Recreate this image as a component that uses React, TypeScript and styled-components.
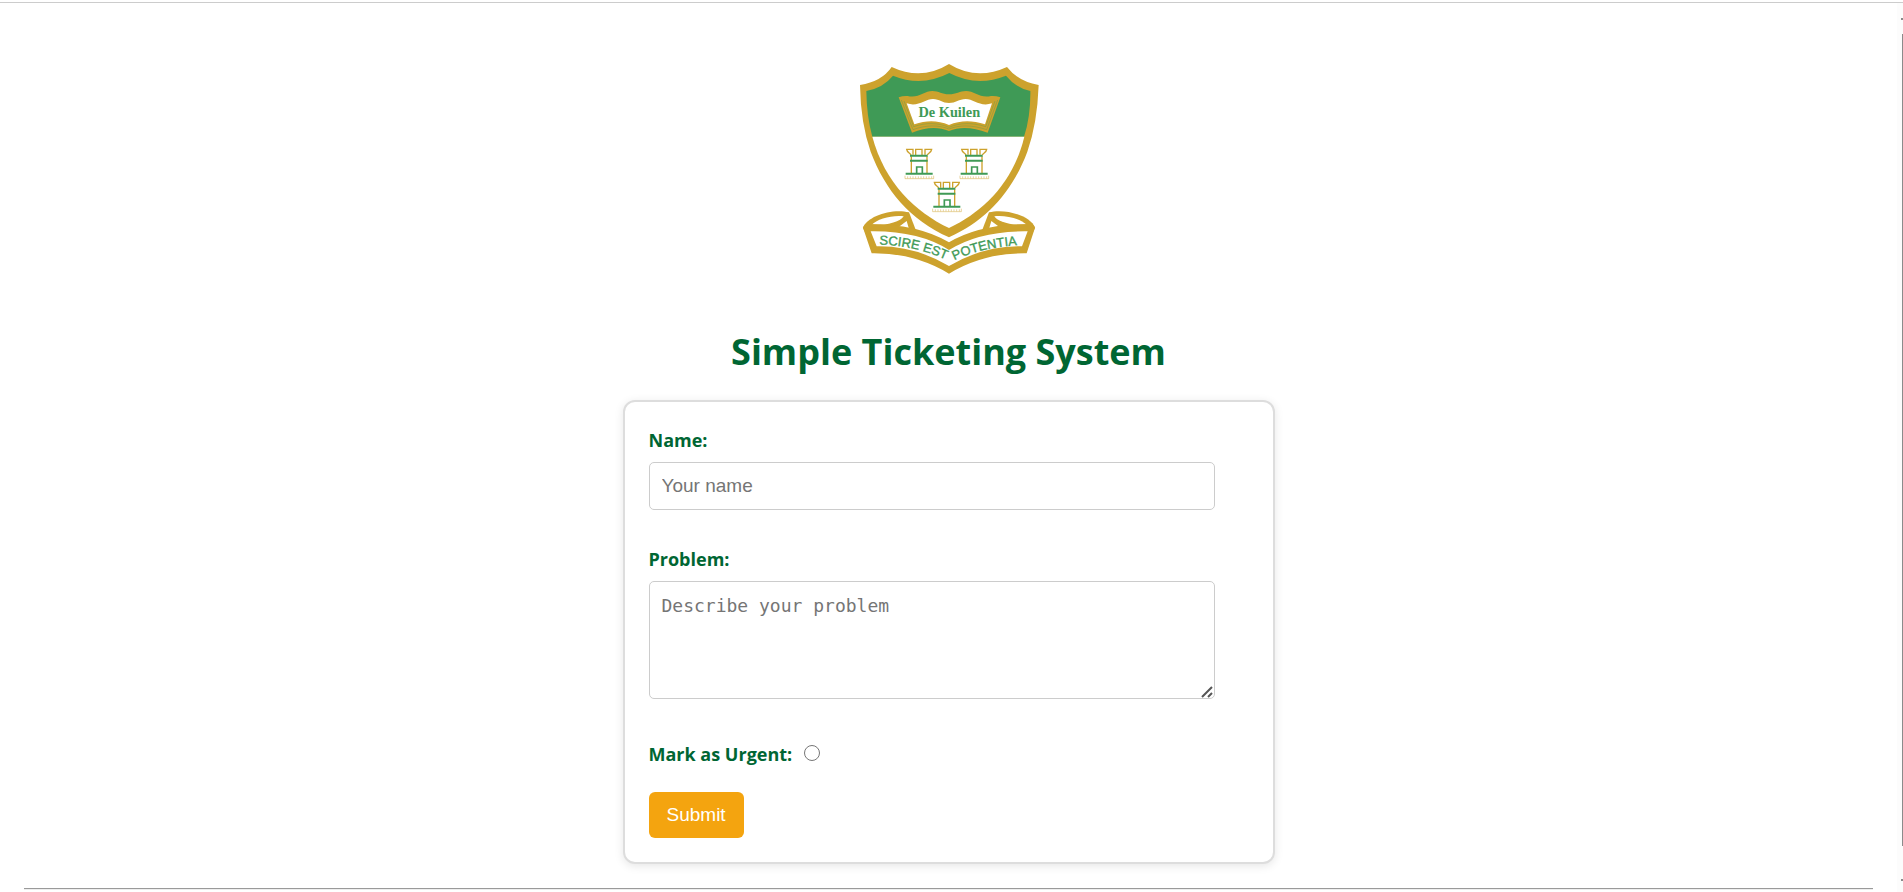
import React from "react";
import styled, { createGlobalStyle } from "styled-components";

const GOLD = "#cda22d";
const GREEN = "#3f9a56";

const GlobalStyle = createGlobalStyle`
  *, *::before, *::after { box-sizing: border-box; }
  html, body { margin: 0; background: #fff; }
  body { overflow: hidden; font-family: "Open Sans", "Noto Sans", sans-serif; }
`;

const Shell = styled.div`
  display: flex;
  height: 100vh;
  overflow: hidden;
  border-top: 1px solid #ccc;
  margin-top: 2px;
`;

const Page = styled.main`
  flex: 1;
  display: flex;
  flex-direction: column;
  align-items: center;
  padding: 59px 24px 0;
`;

const Crest = styled.svg`
  display: block;
  flex: none;
  width: 182px;
  height: 214px;
`;

const BookName = styled.text`
  font: 700 43px "Liberation Serif", "Times New Roman", serif;
`;

const Motto = styled.text`
  font: 39px "Liberation Sans", Arial, sans-serif;
  stroke: ${GREEN};
  stroke-width: 1px;
`;

const Title = styled.h1`
  margin: 48px 0 20px;
  color: #006633;
  font-size: 36px;
  line-height: 56px;
  font-weight: 700;
`;

const Form = styled.form`
  flex: none;
  display: flex;
  flex-direction: column;
  align-items: flex-start;
  width: 100%;
  max-width: 652px;
  padding: 24px;
  border: 2px solid #ddd;
  border-radius: 12px;
  background: #fff;
  box-shadow: 0 2px 10px rgba(0, 0, 0, 0.1);
`;

const Field = styled.div`
  width: 100%;
  display: flex;
  flex-direction: column;
  padding-right: 34px;
  margin-bottom: 35px;
`;

const Label = styled.label`
  color: #006633;
  font-size: 18px;
  line-height: 26px;
  font-weight: 700;
`;

const FieldLabel = styled(Label)`
  padding-top: 1px;
  margin-bottom: 9px;
`;

const TextInput = styled.input`
  width: 100%;
  height: 48px;
  padding: 12px;
  border: 1px solid #ccc;
  border-radius: 5px;
  font: 19px "Liberation Sans", Arial, sans-serif;
  &::placeholder { color: #757575; }
`;

const TextAreaBox = styled.div`
  position: relative;
`;

const TextArea = styled.textarea`
  display: block;
  width: 100%;
  height: 118px;
  padding: 12px;
  border: 1px solid #ccc;
  border-radius: 5px;
  resize: vertical;
  font: 18px/24px "DejaVu Sans Mono", monospace;
  &::placeholder { color: #757575; }
  &::-webkit-resizer { background: transparent; }
`;

const Grip = styled.svg`
  position: absolute;
  right: 2px;
  bottom: 1px;
  width: 12px;
  height: 12px;
  pointer-events: none;
`;

const UrgentRow = styled.div`
  display: flex;
  align-items: center;
  gap: 12px;
  margin: 7px 0 25px;
`;

const Radio = styled.input`
  width: 16px;
  height: 16px;
  margin: 0 0 2px;
`;

const Submit = styled.button`
  height: 46px;
  padding: 0 18px;
  border: 0;
  border-radius: 6px;
  background: #f4a40f;
  color: #fff;
  font: 19px "Liberation Sans", Arial, sans-serif;
`;

const Divider = styled.hr`
  width: 100%;
  margin: 24px 0 0;
  border: 0;
  border-top: 1px solid #9a9a9a;
  border-bottom: 1px solid #eee;
`;

const ScrollRail = styled.div`
  flex: none;
  width: 6px;
  display: flex;
  flex-direction: column;
  align-items: flex-end;
  justify-content: space-between;
  padding: 15px 0 13px;
  background: #fcfcfc;
`;

const ScrollArrow = styled.span`
  width: 2px;
  height: 2px;
  background: #8b8b8b;
`;

const ScrollThumb = styled.span`
  flex: 1;
  width: 1px;
  margin: 14px 0 33px;
  background: #8b8b8b;
`;

const Tower = ({ x, y }: { x: number; y: number }) => (
  <g transform={`translate(${x} ${y})`} fill="none">
    <path
      d="M-24 18C-26 12 -36 10 -37 1H-18V17M-10 18V1H9V18M18 17V1H38C37 10 27 12 25 18M-23 22V72M24 22V72"
      stroke={GOLD}
      strokeWidth="4"
    />
    <path
      d="M-42 80V89H44V80M-34 82v6M-26 82v6M-18 82v6M-10 82v6M-2 82v6M6 82v6M14 82v6M22 82v6M30 82v6M38 82v6"
      stroke={GOLD}
      strokeWidth="2"
      opacity="0.7"
    />
    <path d="M-27 20H26M-27 35H26M-40 74H41" stroke={GREEN} strokeWidth="6" />
    <path d="M-7 74V54H10V74" stroke={GREEN} strokeWidth="5" />
  </g>
);

const RibbonCurl = () => (
  <>
    <path d="M24 503C36 468 112 444 162 457L186 520L100 520L30 516Z" fill={GOLD} />
    <path d="M49 496C66 476 112 465 146 469C138 484 98 497 49 496Z" fill="#fff" />
    <path d="M112 494Q140 489 150 470L158 480L136 500Z" fill={GOLD} />
    <path d="M130 502L155 483L162 507Q146 503 130 502Z" fill="#fff" />
  </>
);

const SchoolCrest = () => (
  <Crest viewBox="9 6 546 642" role="img" aria-label="De Kuilen school crest">
    <path
      d="M15 75Q80 65 110 21Q200 63 282 12Q365 63 456 21Q490 65 551 75Q547 190 517 275C474 390 399 480 282 532C165 480 90 390 47 275Q17 190 15 75Z"
      fill={GOLD}
    />
    <path
      d="M34 93Q85 83 114 47Q200 82 283 39Q365 82 453 47Q482 83 526 93Q527 170 507 230H52Q35 170 34 93Z"
      fill={GREEN}
    />
    <path d="M52 230H508C474 370 384 455 282 504C180 455 90 370 52 230Z" fill="#fff" />

    <path
      d="M131 112Q144 107 158 108C190 116 208 93 232 93C252 93 260 103 282 103C304 103 314 93 333 93C358 93 376 116 408 108Q422 107 436 112L398 218C355 202 316 198 282 213C248 198 210 202 171 218Z"
      fill={GOLD}
    />
    <path
      d="M155 130C190 142 210 117 234 117C254 117 262 129 282 129C302 129 312 117 332 117C356 117 376 142 411 130L390 193C350 180 316 181 282 195C248 181 216 180 178 193Z"
      fill="#fff"
    />
    <path
      d="M147 123L176 200C213 187 250 188 282 202C314 188 352 187 392 200L420 123M139 120L174 209C212 195 250 194 282 207C314 194 353 195 395 209L428 120"
      fill="none"
      stroke={GREEN}
      strokeWidth="1"
    />
    <BookName x="283" y="171" textAnchor="middle" fill={GREEN}>De Kuilen</BookName>

    <Tower x={192} y={267} />
    <Tower x={357} y={267} />
    <Tower x={275} y={366} />

    <RibbonCurl />
    <g transform="translate(564 0) scale(-1 1)">
      <RibbonCurl />
    </g>
    <path
      d="M24 503Q28 492 40 492Q190 492 282 547Q374 492 524 492Q536 492 540 503L515 580Q385 578 282 641Q179 578 50 580Z"
      fill={GOLD}
    />
    <path
      d="M47 514Q190 512 282 570Q374 512 518 514L501 559Q385 557 282 618Q179 557 65 559Z"
      fill="#fff"
    />
    <path id="motto-left" d="M73 554Q190 557 295 609" fill="none" />
    <path id="motto-right" d="M298 601Q380 560 515 554" fill="none" />
    <Motto fill={GREEN}>
      <textPath href="#motto-left">SCIRE EST</textPath>
    </Motto>
    <Motto fill={GREEN}>
      <textPath href="#motto-right">POTENTIA</textPath>
    </Motto>
  </Crest>
);

export default function App() {
  return (
    <>
      <GlobalStyle />
      <Shell>
        <Page>
          <SchoolCrest />
          <Title>Simple Ticketing System</Title>
          <Form onSubmit={(e) => e.preventDefault()}>
            <Field>
              <FieldLabel htmlFor="name">Name:</FieldLabel>
              <TextInput id="name" type="text" placeholder="Your name" />
            </Field>
            <Field>
              <FieldLabel htmlFor="problem">Problem:</FieldLabel>
              <TextAreaBox>
                <TextArea id="problem" placeholder="Describe your problem" />
                <Grip viewBox="0 0 12 12" aria-hidden="true">
                  <path d="M1 11L11 1M7 11L11 7" stroke="#555" strokeWidth="2" />
                </Grip>
              </TextAreaBox>
            </Field>
            <UrgentRow>
              <Label htmlFor="urgent">Mark as Urgent:</Label>
              <Radio id="urgent" type="radio" name="urgent" />
            </UrgentRow>
            <Submit type="submit">Submit</Submit>
          </Form>
          <Divider />
        </Page>
        <ScrollRail aria-hidden="true">
          <ScrollArrow />
          <ScrollThumb />
          <ScrollArrow />
        </ScrollRail>
      </Shell>
    </>
  );
}
